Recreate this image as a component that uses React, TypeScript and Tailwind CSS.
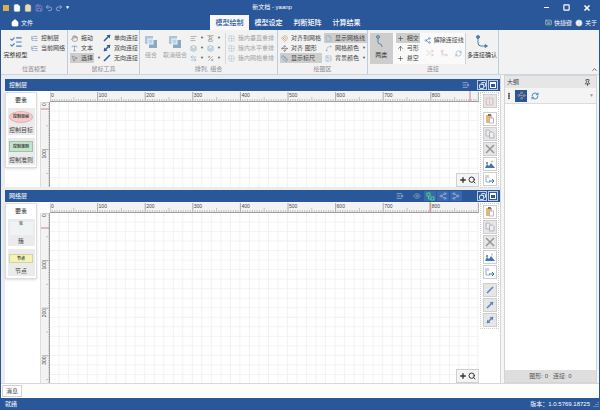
import React, { useLayoutEffect, useRef, useState } from "react";
import {
  Home, Square, X, Minus, Save, Undo2, Redo2, ListTree, Hand, Type, MousePointer2, Shuffle,
  Grid2x2, Plus, Search, Eye, Share2, GitMerge, RefreshCw, Pin, ListChecks, Spline, Info,
  AlignLeft, AlignVerticalJustifyStart, Layers, ArrowLeftRight,
  Percent, File, Copy, Clipboard, Image as ImageIcon, Magnet, ChevronUp,
  Waypoints, Ruler as RulerIcon, ListPlus, ArrowUp, FlipHorizontal, EllipsisVertical, Keyboard,
} from "lucide-react";

type Icon = React.ComponentType<{ size?: number; className?: string; strokeWidth?: number }>;

// Pixels that one hundred drawing units take on screen.
const STEP = 47.6;

function useSize() {
  const ref = useRef<SVGSVGElement>(null);
  const [size, setSize] = useState({ width: 0, height: 0 });
  useLayoutEffect(() => {
    const el = ref.current;
    if (!el) return;
    const read = () => {
      const box = el.getBoundingClientRect();
      setSize({ width: box.width, height: box.height });
    };
    read();
    const observer = new ResizeObserver(read);
    observer.observe(el);
    return () => observer.disconnect();
  }, []);
  return { ref, size };
}

function upTo(length: number, step: number) {
  return Array.from({ length: Math.max(0, Math.ceil(length / step)) }, (_, i) => i);
}

function Caret() {
  return <span className="text-[4px] leading-none text-[#555]">▼</span>;
}

function Group({ label, className, children }: { label: string; className: string; children: React.ReactNode }) {
  return (
    <section className={"flex shrink-0 flex-col border-r border-[#bccde2] pt-[3px] " + className}>
      <div className="flex h-[31px]">{children}</div>
      <div className="text-center text-[6px] leading-[10px] text-[#8c8c8c]">{label}</div>
    </section>
  );
}

function Item({ icon: I, text, caret, on, off, tint = "text-[#5b87b5]" }: {
  icon: Icon; text?: string; caret?: boolean; on?: boolean; off?: boolean; tint?: string;
}) {
  return (
    <button
      type="button"
      aria-label={text ?? "排列"}
      className={"flex h-[10px] items-center gap-[3px] whitespace-nowrap px-[1px] text-[6px] leading-[10px] " +
        (on ? "bg-[#cdcdcd] " : "") + (off ? "text-[#a3a3a3]" : "text-[#444]")}
    >
      <I size={7} strokeWidth={2} className={"shrink-0 " + tint} />
      {text}
      {caret && <Caret />}
    </button>
  );
}

function Big({ icon: I, text, off, on, className = "", tint = "text-[#4d7fb4]" }: {
  icon: Icon; text: string; off?: boolean; on?: boolean; className?: string; tint?: string;
}) {
  return (
    <button
      type="button"
      className={"flex flex-col items-center gap-[2px] whitespace-nowrap pt-[2px] text-[6px] leading-[8px] " +
        (on ? "bg-[#cdcdcd] " : "") + (off ? "text-[#a3a3a3] " : "text-[#333] ") + className}
    >
      <I size={14} strokeWidth={2} className={tint} />
      {text}
    </button>
  );
}

function Combine({ className = "" }: { className?: string }) {
  return (
    <svg width="14" height="14" viewBox="0 0 14 14" className={className} aria-hidden="true">
      <rect x="1" y="1" width="8" height="8" fill="#a9c5da" />
      <rect x="5" y="5" width="8" height="8" fill="#86a9c4" />
      <rect x="4" y="4" width="5" height="5" fill="#b9d3e5" stroke="#f1f1f1" />
    </svg>
  );
}

function Link({ ends, className = "" }: { ends: 0 | 1 | 2; className?: string }) {
  return (
    <svg width="8" height="8" viewBox="0 0 8 8" fill="currentColor" className={"shrink-0 " + className} aria-hidden="true">
      <path d="M1 7 7 1" stroke="currentColor" strokeWidth="1.600" />
      {ends > 0 && <path d="M3.500 1H7V4.500Z" />}
      {ends > 1 && <path d="M1 3.500V7H4.500Z" />}
    </svg>
  );
}

const PlainLink: Icon = ({ className }) => <Link ends={0} className={className} />;
const OneWayLink: Icon = ({ className }) => <Link ends={1} className={className} />;
const TwoWayLink: Icon = ({ className }) => <Link ends={2} className={className} />;

function HRuler({ marker }: { marker: number }) {
  const { ref, size } = useSize();
  return (
    <svg ref={ref} className="block h-[11px] w-full bg-[#f3f3f3]" aria-hidden="true">
      {upTo(size.width, STEP / 20).map((i) => (
        <line key={i} x1={(i * STEP) / 20} x2={(i * STEP) / 20} y1={i % 20 === 0 ? 1 : i % 10 === 0 ? 6 : 8} y2="11"
          stroke="#a3a3a3" strokeWidth={i % 20 === 0 ? 0.9 : 0.6} />
      ))}
      {upTo(size.width - 12, STEP).map((i) => (
        <text key={i} x={i * STEP + 1} y="6" fontSize="5" fill="#444">{i * 100}</text>
      ))}
      <line x1="0" x2="100%" y1="10.5" y2="10.5" stroke="#a0a0a0" />
      <line x1={marker} x2={marker} y1="0" y2="11" stroke="#d98080" />
    </svg>
  );
}

function VRuler({ marker }: { marker: number }) {
  const { ref, size } = useSize();
  return (
    <svg ref={ref} className="block min-h-0 w-[10px] flex-1 border-l border-[#ddd] bg-[#f3f3f3]" aria-hidden="true">
      {upTo(size.height, STEP / 20).map((i) => (
        <line key={i} y1={(i * STEP) / 20} y2={(i * STEP) / 20} x1={i % 20 === 0 ? 1 : i % 10 === 0 ? 5 : 7} x2="10"
          stroke="#a3a3a3" strokeWidth={i % 20 === 0 ? 0.9 : 0.6} />
      ))}
      {upTo(size.height - 12, STEP).map((i) => (
        <text key={i} transform={`translate(5 ${i * STEP + (i ? 9 : 4)}) rotate(-90)`} fontSize="5" fill="#444">{i * 100}</text>
      ))}
      <line x1="8.5" x2="8.5" y1="0" y2="100%" stroke="#a0a0a0" />
      <line x1="0" x2="10" y1={marker} y2={marker} stroke="#d98080" />
    </svg>
  );
}

function Canvas({ id }: { id: string }) {
  return (
    <div className="relative min-h-0 flex-1 bg-white">
      <svg className="block h-full w-full" aria-hidden="true">
        <defs>
          <pattern id={id} width="9.52" height="9.52" patternUnits="userSpaceOnUse">
            <path d="M9 0V9.52M0 9H9.52" stroke="#f2f2f3" strokeWidth="1" />
          </pattern>
        </defs>
        <rect width="100%" height="100%" fill={`url(#${id})`} />
      </svg>
      <div className="absolute bottom-0 right-0 flex h-[14px] w-[23px] items-center justify-evenly border border-[#d0d0d0] bg-[#f4f4f4] text-[#333]">
        <button type="button" aria-label="放大"><Plus size={8} strokeWidth={4} /></button>
        <button type="button" aria-label="缩放"><Search size={8} strokeWidth={3} /></button>
      </div>
    </div>
  );
}

function Tool({ icon: I, label, tint, off, gap }: { icon: Icon; label: string; tint: string; off?: boolean; gap?: boolean }) {
  return (
    <button
      type="button"
      aria-label={label}
      className={"flex h-[14px] w-[14px] shrink-0 items-center justify-center border border-[#cfcfcf] " +
        (off ? "bg-[#e6e6e6] " : "bg-white ") + (gap ? "mb-[3px] " : "") + tint}
    >
      <I size={9} strokeWidth={2} />
    </button>
  );
}

function Paste() {
  return (
    <svg width="10" height="10" viewBox="0 0 10 10" aria-hidden="true">
      <path d="M1 1H7V4H4V9H1Z" fill="#e6b774" />
      <rect x="3" y="0" width="3" height="2" fill="#7c7468" />
      <rect x="4.500" y="4" width="4" height="5" fill="#fff" stroke="#a9a9b4" strokeWidth=".8" />
    </svg>
  );
}

function Pages() {
  return (
    <svg width="10" height="10" viewBox="0 0 10 10" fill="#eceef0" stroke="#a5aab0" strokeWidth=".8" aria-hidden="true">
      <path d="M1 1H4L5.500 2.500V7H1Z" />
      <path d="M4.500 3H7.500L9 4.500V9H4.500Z" />
    </svg>
  );
}

function Cross() {
  return (
    <svg width="10" height="10" viewBox="0 0 10 10" aria-hidden="true">
      <path d="M1 1 9 9M9 1 1 9" stroke="#969696" strokeWidth="1.500" />
    </svg>
  );
}

function Mountains() {
  return (
    <svg width="10" height="10" viewBox="0 0 10 10" aria-hidden="true">
      <path d="M0 9 2 5 4 7 6 4 10 9Z" fill="#3f75b0" />
      <circle cx="2" cy="4" r="1" fill="#3f75b0" />
      <circle cx="7" cy="2.500" r="1" fill="#b7c795" />
    </svg>
  );
}

function Export() {
  return (
    <svg width="10" height="10" viewBox="0 0 10 10" fill="none" aria-hidden="true">
      <path d="M1 1V8H5M3 4V1" stroke="#8fa9c6" />
      <path d="M4 7H9M7 5 9 7 7 9" stroke="#3c72ad" />
    </svg>
  );
}

function Nodes() {
  return (
    <svg width="9" height="9" viewBox="0 0 9 9" fill="none" stroke="#45d47b" aria-hidden="true">
      <rect x="1" y="1" width="3" height="3" />
      <rect x="5" y="5" width="3" height="3" />
      <path d="M2.500 4V7H5" />
    </svg>
  );
}

function Elbow({ className = "" }: { className?: string }) {
  return (
    <svg width="14" height="14" viewBox="0 0 14 14" fill="none" stroke="currentColor" className={className} aria-hidden="true">
      <circle cx="3" cy="2" r="1.500" fill="#4d7fb4" />
      <path d="M3 3V8Q3 11 6 11H12" />
      <path d="M10 9.500 12.500 11 10 12.500Z" fill="#4d7fb4" />
    </svg>
  );
}

function Bend({ className = "" }: { className?: string }) {
  return (
    <svg width="14" height="14" viewBox="0 0 14 14" fill="none" stroke="currentColor" className={className} aria-hidden="true">
      <circle cx="4" cy="2" r="1.500" fill="#8fb0cc" />
      <path d="M4 4V7Q4 9 6 9T8 12" />
    </svg>
  );
}

function EditTools() {
  return (
    <>
      <Tool icon={Paste} label="粘贴" tint="text-[#d59a4e]" />
      <Tool icon={Pages} label="复制" tint="text-[#a9adb2]" off />
      <Tool icon={Cross} label="删除" tint="text-[#969696]" off />
      <Tool icon={Mountains} label="导出图片" tint="text-[#3c72ad]" />
    </>
  );
}

function Panel({ title, header, palette, tools, hMark, vMark, id, className }: {
  title: string; header: React.ReactNode; palette: React.ReactNode; tools: React.ReactNode;
  hMark: number; vMark: number; id: string; className: string;
}) {
  return (
    <section className={"flex min-h-0 flex-col bg-white " + className}>
      <header className="flex h-[12px] shrink-0 items-center bg-[#2a579a] pl-[4px] pr-[2px] text-white">
        <h2 className="flex-1 text-[6px] leading-[12px]">{title}</h2>
        {header}
        <button type="button" aria-label="还原" className="ml-[7px] flex h-[10px] w-[10px] items-center justify-center border border-[#b9c9e2]"><Copy size={7} strokeWidth={3} className="-scale-x-100" /></button>
        <button type="button" aria-label="最大化" className="ml-[1px] flex h-[10px] w-[10px] items-center justify-center border border-[#b9c9e2]">
          <span className="h-[6px] w-[6px] border border-t-2 border-white" />
        </button>
      </header>
      <div className="flex min-h-0 flex-1">
        <div className="w-[35px] shrink-0 pt-[1px]">
          <div className="flex w-[32px] flex-col items-center gap-[3px] border border-[#dcdcdc] bg-white pb-[2px] shadow-sm">
            <h3 className="h-[12px] text-[6px] leading-[14px] text-[#333]">要素</h3>
            {palette}
          </div>
        </div>
        <div className="flex w-[10px] shrink-0 flex-col pt-[11px]">
          <VRuler marker={vMark} />
        </div>
        <div className="flex min-w-0 flex-1 flex-col">
          <HRuler marker={hMark} />
          <Canvas id={id} />
        </div>
        <div className="w-[21px] shrink-0 pl-[1px] pt-[1px]">
          <div className="flex w-[19px] flex-col items-center gap-[1px] border border-dotted border-[#cfcfcf] py-[1px]">{tools}</div>
        </div>
      </div>
    </section>
  );
}

function Shape({ label, children }: { label: string; children: React.ReactNode }) {
  return (
    <button type="button" className="flex h-[27px] w-[27px] flex-col items-center justify-between bg-[#ebebeb] pt-[3px] text-[6px] leading-[9px] text-[#444]">
      {children}
      {label}
    </button>
  );
}

const headIcon = "flex h-[10px] w-[12px] items-center justify-center";

export default function App() {
  return (
    <div className="flex h-screen flex-col overflow-hidden border-x border-[#2a579a] bg-[#f5f5f5] font-['Liberation_Sans','Noto_Sans_CJK_SC',sans-serif]">
      <div className="grid h-[15px] shrink-0 grid-cols-[9fr_auto_11fr] items-center bg-[#2a579a] text-white">
        <div className="flex items-center gap-[2px] pl-[2px]">
          <span className="h-[6px] w-[6px] bg-[#dfad45]" />
          <button type="button" aria-label="新建" className="ml-[2px] text-white"><File size={8} fill="#fff" /></button>
          <button type="button" aria-label="打开" className="ml-[1px] text-[#f0d6a0]"><Clipboard size={8} fill="#ead9b8" /></button>
          <button type="button" aria-label="保存" className="ml-[1px] text-[#a28fd0]"><Save size={8} /></button>
          <button type="button" aria-label="撤销" className="text-[#86a5d3]"><Undo2 size={8} strokeWidth={3} /></button>
          <button type="button" aria-label="重做" className="text-[#86a5d3]"><Redo2 size={8} strokeWidth={3} /></button>
          <span className="text-[5px] leading-none">▼</span>
        </div>
        <h1 className="text-[6px] leading-[15px]">新文档 - yaanp</h1>
        <div className="flex items-center justify-end gap-[13px] pr-[8px]">
          <button type="button" aria-label="最小化"><Minus size={7} strokeWidth={4} /></button>
          <button type="button" aria-label="最大化"><Square size={7} strokeWidth={4} /></button>
          <button type="button" aria-label="关闭"><X size={8} strokeWidth={5} /></button>
        </div>
      </div>

      <nav className="flex h-[15px] shrink-0 items-center bg-[#2a579a] text-[7px] leading-[14px] text-white">
        <button type="button" className="flex w-[209px] items-center gap-[2px] pl-[10px] text-[6px]">
          <Home size={8} fill="#fff" strokeWidth={2} />文件
        </button>
        {["模型绘制", "模型设定", "判断矩阵", "计算结果"].map((t, i) => (
          <button type="button" key={t} className={"h-[15px] w-[39px] whitespace-nowrap font-medium " + (i === 0 ? "bg-[#f8f8f8] text-[#2a579a]" : "")}>{t}</button>
        ))}
        <div className="ml-auto flex items-center gap-[3px] pr-[2px] text-[6px]">
          <button type="button" className="flex items-center gap-[2px]"><Keyboard size={7} className="text-[#b7dcc4]" />快捷键</button>
          <button type="button" className="flex items-center gap-[2px]"><Info size={8} fill="#fff" className="text-[#6a8abb]" />关于</button>
        </div>
      </nav>

      <div className="flex h-[45px] shrink-0 border-b border-[#c9d6e6] bg-[#f2f2f2]">
        <Group label="位置模型" className="w-[67px]">
          <Big icon={ListChecks} text="完整模型" className="w-[29px]" />
          <div className="flex flex-col">
            <Item icon={ListTree} text="控制层" />
            <Item icon={ListTree} text="当前网络" />
          </div>
        </Group>
        <Group label="鼠标工具" className="w-[72px]">
          <div className="flex w-[34px] flex-col items-start pl-[2px]">
            <Item icon={Hand} text="拖动" tint="text-[#777]" />
            <Item icon={Type} text="文本" />
            <div className="flex items-center gap-[3px]"><Item icon={MousePointer2} text="选择" on tint="text-[#777]" /><Caret /></div>
          </div>
          <div className="flex flex-col">
            <Item icon={OneWayLink} text="单向连接" tint="text-[#2c5fa0]" />
            <Item icon={TwoWayLink} text="双向连接" tint="text-[#2c5fa0]" />
            <Item icon={PlainLink} text="无向连接" tint="text-[#2c5fa0]" />
          </div>
        </Group>
        <Group label="排列, 组合" className="w-[138px]">
          <Big icon={Combine} text="组合" off className="w-[22px]" />
          <Big icon={Combine} text="取消组合" off className="w-[26px]" />
          <div className="flex w-[18px] flex-col pl-[1px]">
            <Item icon={AlignLeft} caret tint="text-[#888]" />
            <Item icon={Layers} caret tint="text-[#7aa7c7]" />
            <Item icon={ArrowLeftRight} caret tint="text-[#7aa7c7]" />
          </div>
          <div className="flex w-[20px] flex-col border-r border-[#d8d8d8]">
            <Item icon={AlignVerticalJustifyStart} caret tint="text-[#888]" />
            <Item icon={Layers} caret tint="text-[#7aa7c7]" />
            <Item icon={Percent} caret tint="text-[#888]" />
          </div>
          <div className="flex flex-col pl-[1px]">
            {["簇内垂直重排", "簇内水平重排", "簇内网格重排"].map((t) => <Item key={t} icon={Grid2x2} text={t} off tint="text-[#b5c8d8]" />)}
          </div>
        </Group>
        <Group label="绘图区" className="w-[90px]">
          <div className="flex w-[46px] flex-col pl-[2px] pr-[2px]">
            <Item icon={Magnet} text="对齐到网格" tint="text-[#c09a6a]" />
            <Item icon={Waypoints} text="对齐 图形" tint="text-[#777]" />
            <Item icon={RulerIcon} text="显示标尺" on />
          </div>
          <div className="flex flex-col">
            <Item icon={File} text="显示网格线" on tint="text-[#8ba9c6]" />
            <Item icon={Spline} text="网格颜色" caret tint="text-[#8fb0cc]" />
            <Item icon={ImageIcon} text="背景颜色" caret tint="text-[#8fb0cc]" />
          </div>
        </Group>
        <Group label="连接" className="w-[131px]">
          <Big icon={Bend} text="两类" on className="ml-[2px] w-[24px]" tint="text-[#5a84ad]" />
          <div className="flex flex-col bg-[#fafafa] px-[3px]">
            <Item icon={Plus} text="相交" on tint="text-[#444]" />
            <Item icon={ArrowUp} text="弓形" tint="text-[#444]" />
            <Item icon={Plus} text="悬空" tint="text-[#444]" />
          </div>
          <div className="flex flex-1 flex-col gap-[4px] border-r border-[#ccd3dc] bg-[#fafafa] pt-[2px]">
            <Item icon={Share2} text="解除连接线" />
            <div className="flex items-center justify-around text-[#dfc4c4]">
              <Shuffle size={8} /><GitMerge size={8} /><RefreshCw size={7} className="text-[#7eabc9]" />
            </div>
          </div>
          <Big icon={Elbow} text="多连接确认" className="w-[34px]" />
        </Group>
        <button type="button" aria-label="折叠功能区" className="ml-auto self-end p-[1px] text-[#555]"><ChevronUp size={7} strokeWidth={3} /></button>
      </div>

      <main className="flex min-h-0 flex-1">
        <div className="flex min-w-0 flex-1 flex-col gap-[3px] border-r border-[#d5d5d5] bg-[#ececec] pl-[4px] pt-[4px]">
          <Panel
            id="control-grid" title="控制层" className="h-[108px] shrink-0" hMark={420} vMark={7}
            header={<button type="button" aria-label="排序"><ListPlus size={8} className="text-[#b9c9e2]" /></button>}
            palette={<>
              <Shape label="控制目标"><span className="flex h-[12px] w-[24px] items-center justify-center rounded-[50%] border border-[#e3b2b2] bg-[#f7caca] text-[4px] font-bold leading-none">控制目标</span></Shape>
              <Shape label="控制准则"><span className="flex h-[11px] w-[24px] items-center justify-center border border-[#a2bfa8] bg-[#c2e4ca] text-[4px] font-bold leading-none">控制准则</span></Shape>
            </>}
            tools={<>
              <Tool icon={FlipHorizontal} label="镜像" tint="text-[#dda5a5]" off gap />
              <EditTools />
              <Tool icon={Export} label="导出" tint="text-[#3c72ad]" />
            </>}
          />
          <Panel
            id="network-grid" title="网络层" className="flex-1" hMark={380} vMark={15}
            header={<div className="flex gap-[1px]">
              <button type="button" aria-label="排序" className={headIcon + " text-[#b9c9e2]"}><ListPlus size={8} /></button>
              <button type="button" aria-label="显示" className={headIcon + " ml-[4px] text-[#8aa6d0]"}><Eye size={8} /></button>
              <button type="button" aria-label="连接关系" className={headIcon + " bg-[#3b68ad]"}><Nodes /></button>
              <button type="button" aria-label="分支" className={headIcon + " bg-[#3b68ad] text-[#9db7dd]"}><Share2 size={8} /></button>
              <button type="button" aria-label="合并" className={headIcon + " mr-[8px] bg-[#3b68ad] text-[#9db7dd]"}><Share2 size={8} className="-scale-x-100" /></button>
            </div>}
            palette={<>
              <Shape label="簇"><span className="h-[13px] w-[23px] bg-[#f0f3f3] text-center text-[4px] leading-[4px]">簇</span></Shape>
              <Shape label="节点"><span className="mt-[2px] flex h-[9px] w-[24px] items-center justify-center border border-[#d4d49c] bg-[#f2f2b9] text-[4px] font-bold leading-none">节点</span></Shape>
            </>}
            tools={<>
              <EditTools />
              <Tool icon={Export} label="导出" tint="text-[#3c72ad]" gap />
              <Tool icon={PlainLink} label="无向连接" tint="text-[#5f86bd]" off />
              <Tool icon={OneWayLink} label="单向连接" tint="text-[#5f86bd]" off />
              <Tool icon={TwoWayLink} label="双向连接" tint="text-[#5f86bd]" off />
            </>}
          />
        </div>
        <aside className="ml-[3px] mr-[2px] flex w-[93px] shrink-0 flex-col border border-[#d5d5d5] bg-white">
          <header className="flex h-[12px] shrink-0 items-center justify-between bg-[#e6e6e6] pl-[2px] pr-[5px] text-[#444]">
            <h2 className="text-[6px] leading-[12px]">大纲</h2>
            <button type="button" aria-label="固定"><Pin size={7} strokeWidth={3} /></button>
          </header>
          <div className="flex h-[16px] shrink-0 items-center border-b border-[#dcdcdc] bg-[#f4f4f4]">
            <EllipsisVertical size={8} strokeWidth={4} className="text-[#333]" />
            <button type="button" aria-label="大纲视图" className="ml-[2px] flex h-[12px] w-[12px] items-center justify-center bg-[#2a579a] text-[#a99a80]"><Waypoints size={9} /></button>
            <button type="button" aria-label="刷新" className="ml-[4px] text-[#3d8fc4]"><RefreshCw size={8} strokeWidth={3} /></button>
            <span className="ml-auto pr-[2px] text-[5px] text-[#999]">▼</span>
          </div>
          <div className="flex-1" />
          <div className="h-[12px] shrink-0 whitespace-pre bg-[#dedede] text-center text-[6px] leading-[12px] text-[#555]">图形: 0   连接: 0</div>
        </aside>
      </main>

      <div className="flex h-[15px] shrink-0 items-center border-t border-[#d8d8d8] bg-[#fdfdfa] pl-[1px]">
        <button type="button" className="h-[12px] border border-[#d2d2d2] bg-white px-[3px] text-[6px] leading-[10px] text-[#444]">消息</button>
      </div>
      <footer className="flex h-[12px] shrink-0 items-center bg-[#2a579a] pl-[4px] text-[6px] leading-[12px] text-white">
        <span className="flex-1">就绪</span>
        <span>版本：1.0.5769.18725</span>
        <svg width="8" height="8" viewBox="0 0 8 8" className="ml-[1px]" aria-hidden="true">
          <path d="M7 2V3M5 4V5M7 4V5M3 6V7M5 6V7M7 6V7" stroke="#9fb6da" />
        </svg>
      </footer>
    </div>
  );
}
